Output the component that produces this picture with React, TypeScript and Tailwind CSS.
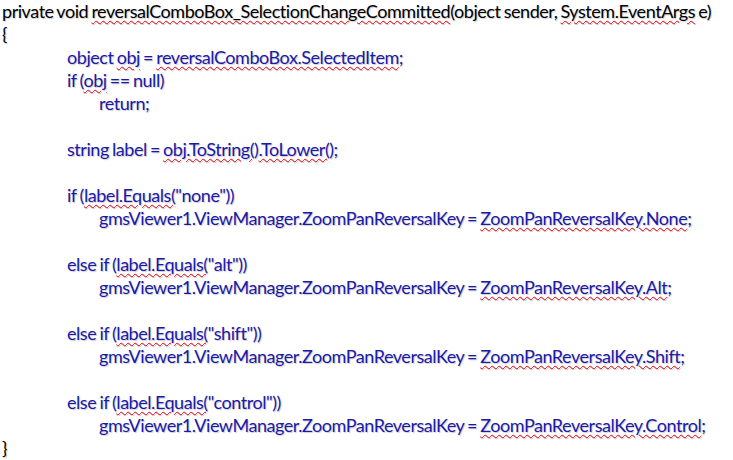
type Seg = { t: string; u?: boolean };
type Line = { indent: 0 | 1 | 2; dark?: boolean; segs: Seg[] };

const LINES: Line[] = [
  {
    indent: 0,
    dark: true,
    segs: [
      { t: "private void " },
      { t: "reversalComboBox_SelectionChangeCommitted", u: true },
      { t: "(object sender, " },
      { t: "System.EventArgs", u: true },
      { t: " e)" },
    ],
  },
  { indent: 0, dark: true, segs: [{ t: "{" }] },
  {
    indent: 1,
    segs: [
      { t: "object " },
      { t: "obj", u: true },
      { t: " = " },
      { t: "reversalComboBox.SelectedItem", u: true },
      { t: ";" },
    ],
  },
  { indent: 1, segs: [{ t: "if (" }, { t: "obj", u: true }, { t: " == null)" }] },
  { indent: 2, segs: [{ t: "return;" }] },
  { indent: 1, segs: [] },
  {
    indent: 1,
    segs: [
      { t: "string label = " },
      { t: "obj.ToString(", u: true },
      { t: ")" },
      { t: ".ToLower(", u: true },
      { t: ");" },
    ],
  },
  { indent: 1, segs: [] },
  { indent: 1, segs: [{ t: "if (" }, { t: "label.Equals(", u: true }, { t: "\"none\"))" }] },
  {
    indent: 2,
    segs: [
      { t: "gmsViewer1.ViewManager.ZoomPanReversalKey = " },
      { t: "ZoomPanReversalKey.None", u: true },
      { t: ";" },
    ],
  },
  { indent: 1, segs: [] },
  { indent: 1, segs: [{ t: "else if (" }, { t: "label.Equals(", u: true }, { t: "\"alt\"))" }] },
  {
    indent: 2,
    segs: [
      { t: "gmsViewer1.ViewManager.ZoomPanReversalKey = " },
      { t: "ZoomPanReversalKey.Alt", u: true },
      { t: ";" },
    ],
  },
  { indent: 1, segs: [] },
  { indent: 1, segs: [{ t: "else if (" }, { t: "label.Equals(", u: true }, { t: "\"shift\"))" }] },
  {
    indent: 2,
    segs: [
      { t: "gmsViewer1.ViewManager.ZoomPanReversalKey = " },
      { t: "ZoomPanReversalKey.Shift", u: true },
      { t: ";" },
    ],
  },
  { indent: 1, segs: [] },
  { indent: 1, segs: [{ t: "else if (" }, { t: "label.Equals(", u: true }, { t: "\"control\"))" }] },
  {
    indent: 2,
    segs: [
      { t: "gmsViewer1.ViewManager.ZoomPanReversalKey = " },
      { t: "ZoomPanReversalKey.Control", u: true },
      { t: ";" },
    ],
  },
  { indent: 0, dark: true, segs: [{ t: "}" }] },
];

const INDENT = ["pl-[2px]", "pl-[67px]", "pl-[99px]"];

export default function App() {
  return (
    <div className="h-[460px] w-[733px] overflow-hidden bg-white font-['Lato',sans-serif] text-[18px] tracking-[-0.45px] [word-spacing:-1px]">
      {LINES.map((line, i) => (
        <div
          key={i}
          className={`h-[23px] whitespace-pre leading-[23px] [text-shadow:1px_1px_1px_rgba(0,0,0,0.2)] ${INDENT[line.indent]} ${
            line.dark ? "text-black" : "text-[#1a1aa8]"
          }`}
        >
          {line.segs.map((s, j) =>
            s.u ? (
              <span
                key={j}
                className="underline decoration-red-600 decoration-wavy decoration-1 underline-offset-2"
              >
                {s.t}
              </span>
            ) : (
              <span key={j}>{s.t}</span>
            )
          )}
        </div>
      ))}
    </div>
  );
}
